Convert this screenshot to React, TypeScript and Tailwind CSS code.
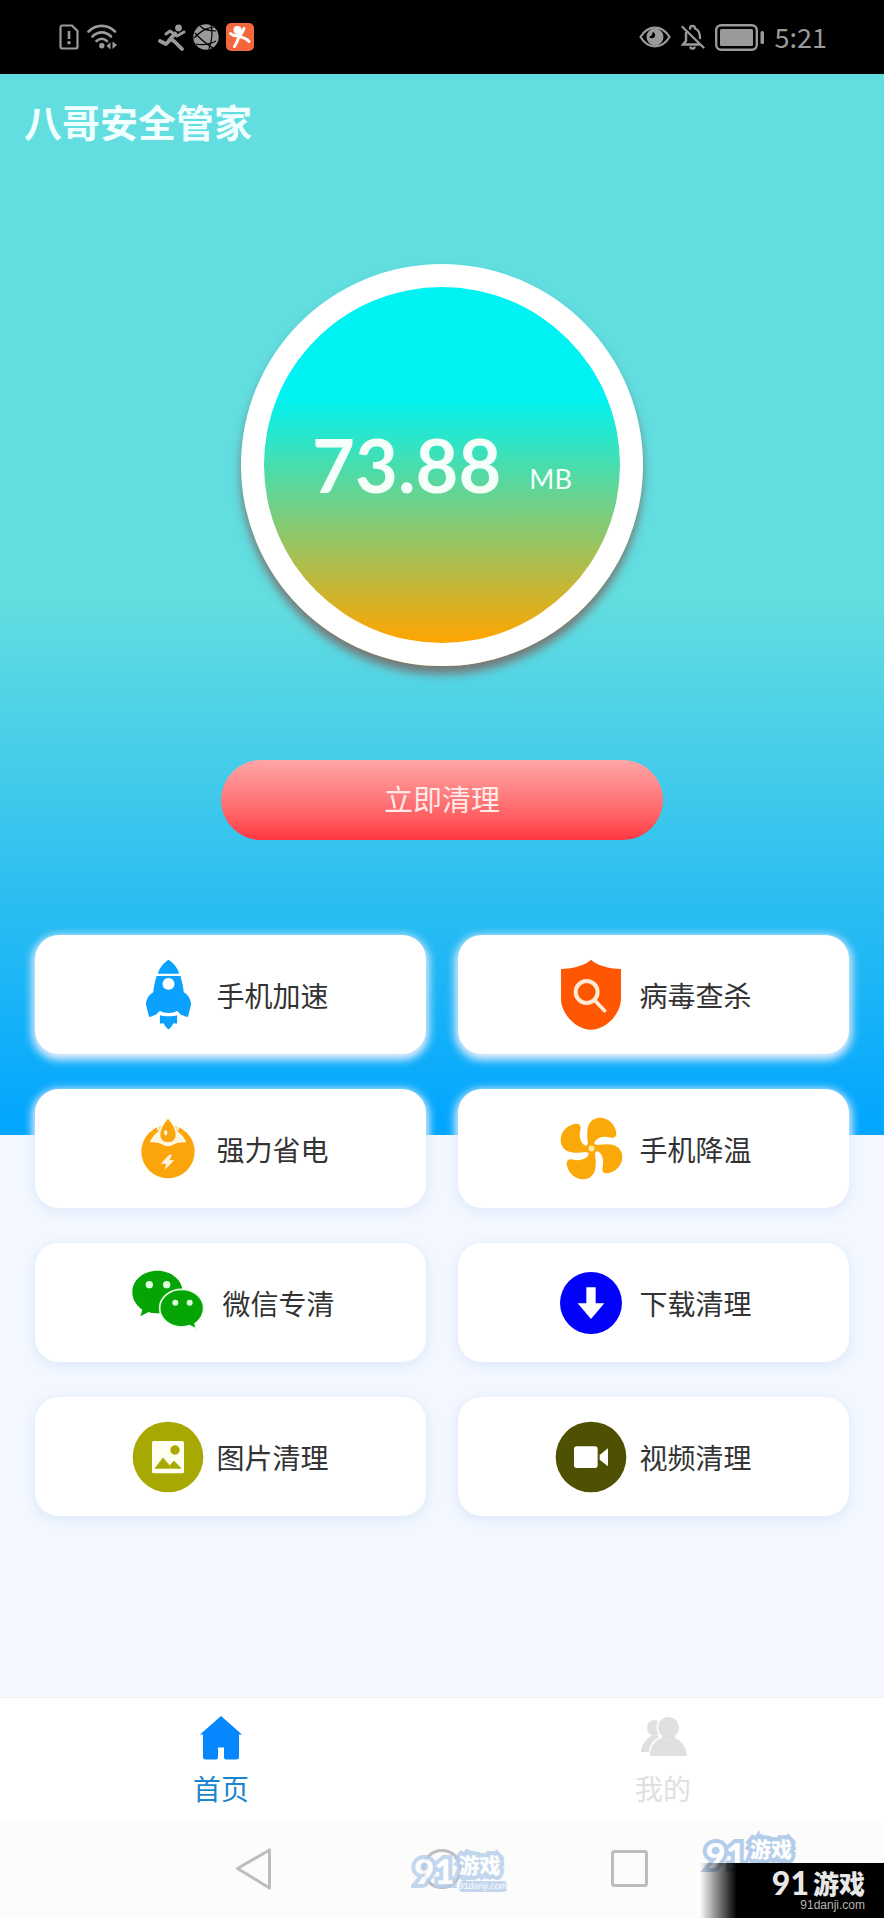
import React from "react";

function StatusBar() {
  return (
    <div className="flex h-[74px] items-center justify-between bg-black pl-[59px] pr-[57px] text-[#9a9a9a]">
      <div className="flex items-center">
        <svg className="h-[26px] w-5" viewBox="0 0 20 26" fill="none" stroke="currentColor" strokeWidth="2.2">
          <path d="M3.500 1.500H13L18.500 7V22.500a2 2 0 0 1-2 2h-13a2 2 0 0 1-2-2v-19a2 2 0 0 1 2-2Z" />
          <path d="M10 7v8" strokeWidth="2.600" />
          <circle cx="10" cy="18.800" r="1.800" fill="currentColor" stroke="none" />
        </svg>
        <svg className="ml-2 h-[26px] w-[31px]" viewBox="0 0 31 26" fill="none" stroke="currentColor" strokeWidth="2.600" strokeLinecap="round">
          <path d="M1.500 7.500C9 0 20.500 0 28 7.500" />
          <path d="M5.500 12.500C11 7 18.500 7 24 12.500" />
          <path d="M9.500 17C13 14 16.500 14 20 17" />
          <circle cx="14.800" cy="21.800" r="2.700" fill="currentColor" stroke="none" />
          <path d="M23.500 18v7.500l-4-3.500ZM25.500 25V17.500l4.500 3.500Z" fill="currentColor" stroke="none" />
        </svg>
        <svg className="ml-[40px] h-[27px] w-7" viewBox="0 0 28 27" fill="none" stroke="currentColor" strokeWidth="3.800" strokeLinecap="round" strokeLinejoin="round">
          <circle cx="20.500" cy="4" r="3.400" fill="currentColor" stroke="none" />
          <path d="M8 10l4-3 7 5 7-4" strokeWidth="3" />
          <path d="M17 9.500l-6 7M2 17l6 3 5-5 4 3 7 7" />
        </svg>
        <svg className="ml-[7px] h-[26px] w-[26px]" viewBox="0 0 26 26">
          <circle cx="13" cy="13" r="12.700" fill="currentColor" />
          <path d="M1 14C7 8 12 4 21 3M2 9c5 6 10 10 18 15M18 1c2 7 1 15-2 24M7 2c3 3 8 5 16 5M3 20c6 1 13 1 20-3" fill="none" stroke="#000" strokeWidth="1.200" />
        </svg>
        <svg className="ml-[7px] h-7 w-7" viewBox="0 0 28 28">
          <rect width="28" height="28" rx="5" fill="#f4673c" />
          <circle cx="11.500" cy="7" r="4" fill="#fff" />
          <path d="M4.500 10.500c3 3 9 3 11 0l2.500-5M12 13.500c4 .5 8 1.500 11 5M13 13c-1 4-2 7-4.500 10.500" fill="none" stroke="#fff" strokeWidth="3" strokeLinecap="round" />
        </svg>
      </div>
      <div className="flex items-center">
        <svg className="h-[22px] w-8" viewBox="0 0 32 22">
          <path d="M1.500 11C9-1.500 23-1.500 30.500 11 23 23.500 9 23.500 1.500 11Z" fill="none" stroke="currentColor" strokeWidth="2.200" />
          <path d="M16 2.500a8.500 8.500 0 1 0 8.500 8.500A8.500 8.500 0 0 0 16 2.500Zm-2.500 3.500a3.200 3.200 0 1 1-3.300 4.700A4 4 0 0 0 13.500 6Z" fill="currentColor" fillRule="evenodd" />
        </svg>
        <svg className="ml-[10px] h-[26px] w-6" viewBox="0 0 24 26" fill="none" stroke="currentColor" strokeWidth="2.400" strokeLinecap="round">
          <path d="M1.500 3L22.500 23.500" />
          <path d="M9 4.500C9 1 14 1 14 4.500 18 6 19 9 19 14" />
          <path d="M5 9v8l-3 3.500h16" />
          <path d="M9.500 23.500c1 1.500 3 1.500 4 0" />
        </svg>
        <svg className="ml-[10px] h-[27px] w-[50px]" viewBox="0 0 50 27">
          <rect x="1.200" y="1.200" width="40.600" height="24.600" rx="5" fill="none" stroke="currentColor" strokeWidth="2.400" />
          <rect x="5" y="5" width="33" height="17" rx="1.500" fill="currentColor" />
          <rect x="45.500" y="7" width="3.500" height="13" rx="1.500" fill="currentColor" />
        </svg>
        <span className="ml-[10px] text-[27px] leading-8">5:21</span>
      </div>
    </div>
  );
}

function RocketIcon() {
  return (
    <svg className="h-[71px] w-[47px]" viewBox="0 0 142 214" fill="#0aa1ff">
      <path d="M71 2C56 12 43 27 39 44h64C99 27 86 12 71 2Z" />
      <path
        fillRule="evenodd"
        d="M35 51h72c6 21 9 36 10 49 14 8 22 22 22 37l-9 37c-8 2-11-2-15-4-9 0-10-9-19-13-8 8-42 8-50 0-9 4-10 13-19 13-4 2-7 6-15 4L3 137c0-15 8-29 22-37 1-13 4-28 10-49ZM71 57a18 18 0 1 0 .1 0Z"
      />
      <path d="M45 170c11 4 41 4 52 0v24c-4 4-7-2-11 0-5 8-8 15-15 18-7-3-10-10-15-18-4-2-7 4-11 0Z" />
    </svg>
  );
}

function ShieldIcon() {
  return (
    <svg className="h-[71px] w-[62px]" viewBox="0 0 186 213">
      <path d="M93 2C76 18 40 29 3 30V118c0 50 48 94 90 94s90-44 90-94V30C146 29 110 18 93 2Z" fill="#ff5602" />
      <circle cx="80" cy="99" r="33" fill="none" stroke="#ffe9d6" strokeWidth="12" />
      <path d="M104 124l30 31" stroke="#ffe9d6" strokeWidth="11" strokeLinecap="round" />
    </svg>
  );
}

function PowerIcon() {
  return (
    <svg className="h-[61px] w-[54px]" viewBox="0 0 162 183">
      <circle cx="81" cy="101" r="80" fill="#fba50a" />
      <path d="M26 73C32 58 42 47 54 38h54c12 9 22 20 28 35-12 1-20 1-30 3-10 4-15 9-25 9s-15-5-25-9c-10-2-18-2-30-3Z" fill="#fff5df" />
      <path d="M81 2C67 17 55 36 55 51a26 25 0 0 0 52 0C107 36 95 17 81 2Z" fill="#fff5df" stroke="#fff5df" strokeWidth="7" />
      <path d="M52 15v22M110 15v22" stroke="#fff" strokeWidth="6" />
      <path d="M81 3C67 19 58 36 58 51a23 22 0 0 0 46 0C104 36 95 19 81 3Z" fill="#fba50a" />
      <ellipse cx="74" cy="44" rx="5" ry="8" fill="#fff5df" />
      <path d="M84 110l-24 27h16l-5 18 29-28H85l8-17Z" fill="#fff5df" />
    </svg>
  );
}

const BLADE = "M84 94C84 74 79 56 82 38 84 16 100 1 120 2c24 0 44 20 48 44 1 12-6 18-18 15-20-5-38 0-46 12-3 6-2 12-4 21Z";

function FanIcon() {
  return (
    <svg className="h-[63px] w-[63px]" viewBox="0 0 188 188">
      <g fill="#fba809">
        <path d={BLADE} />
        <path d={BLADE} transform="rotate(90 94 94)" />
        <path d={BLADE} transform="rotate(180 94 94)" />
        <path d={BLADE} transform="rotate(270 94 94)" />
        <circle cx="94" cy="94" r="17" />
      </g>
      <circle cx="94" cy="94" r="9" fill="#ffe9a8" />
    </svg>
  );
}

function WechatIcon() {
  return (
    <svg className="h-[66px] w-[72px]" viewBox="0 0 216 198">
      <path d="M76 2C34 2 1 30 1 66c0 22 11 40 30 53l-6 20 25-13c8 3 17 4 26 4 42 0 76-28 76-64S118 2 76 2Z" fill="#05a505" />
      <path
        d="M149 58c-37 0-66 25-66 56s29 57 66 57c9 0 17-2 24-4l21 11-5-17c16-11 26-27 26-47 0-31-29-56-66-56Z"
        fill="#05a505"
        stroke="#e9ffe9"
        strokeWidth="5"
      />
      <g fill="#dcffdc">
        <circle cx="52" cy="44" r="11" />
        <circle cx="104" cy="44" r="11" />
        <circle cx="130" cy="98" r="9" />
        <circle cx="173" cy="98" r="9" />
      </g>
    </svg>
  );
}

function DownloadIcon() {
  return (
    <svg className="h-[62px] w-[62px]" viewBox="0 0 186 186">
      <circle cx="93" cy="93" r="93" fill="#0202fb" />
      <path d="M79 46h28v48h26l-40 47-40-47h26Z" fill="#fff" />
    </svg>
  );
}

function PictureIcon() {
  return (
    <svg className="h-[72px] w-[72px]" viewBox="0 0 216 216">
      <circle cx="108" cy="108" r="106" fill="#a8a802" />
      <rect x="60" y="60" width="96" height="97" rx="5" fill="#fffff0" />
      <circle cx="129" cy="87" r="14" fill="#a8a802" />
      <path d="M69 142l24-31 20 23 13-14 21 22Z" fill="#a8a802" stroke="#a8a802" strokeWidth="2" strokeLinejoin="round" />
    </svg>
  );
}

function VideoIcon() {
  return (
    <svg className="h-[72px] w-[72px]" viewBox="0 0 216 216">
      <circle cx="108" cy="108" r="106" fill="#505002" />
      <rect x="57" y="76" width="71" height="65" rx="8" fill="#fff" />
      <path d="M134 102l25-20v54l-25-20Z" fill="#fff" />
    </svg>
  );
}

interface FeatureCardProps {
  label: string;
  icon: React.ReactNode;
  wide?: boolean;
}

function FeatureCard({ label, icon, wide }: FeatureCardProps) {
  return (
    <button
      type="button"
      className="flex h-[119px] items-center justify-center gap-3 rounded-3xl bg-white text-[28px] leading-9 text-[#333] shadow-[0_3px_9px_3px_#e3edfc]"
    >
      <span className={wide ? "flex w-[84px] justify-center" : "flex w-[72px] justify-center"}>{icon}</span>
      <span>{label}</span>
    </button>
  );
}

const features: FeatureCardProps[] = [
  { label: "手机加速", icon: <RocketIcon /> },
  { label: "病毒查杀", icon: <ShieldIcon /> },
  { label: "强力省电", icon: <PowerIcon /> },
  { label: "手机降温", icon: <FanIcon /> },
  { label: "微信专清", icon: <WechatIcon />, wide: true },
  { label: "下载清理", icon: <DownloadIcon /> },
  { label: "图片清理", icon: <PictureIcon /> },
  { label: "视频清理", icon: <VideoIcon /> },
];

function TabBar() {
  return (
    <nav className="grid h-[123px] grid-cols-2 border-t border-[#f0f0f2] bg-white text-[28px] leading-9">
      <button type="button" className="flex flex-col items-center gap-[10px] pt-[18px] text-[#1c85cf]">
        <svg className="h-11 w-11" viewBox="0 0 44 44" fill="#0588ff">
          <path d="M22 0L1 18.500h3V41a2.500 2.500 0 0 0 2.500 2.500H17a2 2 0 0 0 2-2V31.500h6v10a2 2 0 0 0 2 2h10.500A2.500 2.500 0 0 0 40 41V18.500h3Z" />
        </svg>
        首页
      </button>
      <button type="button" className="flex flex-col items-center gap-[10px] pt-[18px] text-[#e0e0e0]">
        <svg className="h-11 w-12" viewBox="0 0 48 44" fill="#e0e0e0">
          <ellipse cx="15" cy="12" rx="7" ry="8" />
          <path d="M2 36c0-7 4-12 10-16h8v16Z" />
          <g stroke="#fff" strokeWidth="3" paintOrder="stroke">
            <path d="M11 40c0-10 5-16 12-18v-5h12v5c7 2 12 8 13 18Z" />
            <circle cx="29.500" cy="11.500" r="10.500" />
          </g>
          <path d="M23 18h13v5H23Z" />
        </svg>
        我的
      </button>
    </nav>
  );
}

function Watermark({ site }: { site?: boolean }) {
  return (
    <div className="flex items-start gap-1 text-white [-webkit-text-stroke:8px_#b4cdea] [paint-order:stroke_fill]">
      <span className="font-[Lato] text-[35px] leading-9 font-black">91</span>
      <span className="flex flex-col gap-[5px]">
        <span className="text-[21px] leading-6 font-black">游戏</span>
        {site && (
          <span className="relative rounded-sm bg-[#b4cdea] font-['Liberation_Sans'] text-[9px] leading-[11px] [-webkit-text-stroke:0px]">
            91danji.com
          </span>
        )}
      </span>
    </div>
  );
}

function SystemNav() {
  return (
    <div className="relative flex h-[98px] items-center justify-center gap-[148px] overflow-hidden bg-[#fcfcfc] text-[#bdbdbd]">
      <button type="button" aria-label="返回">
        <svg className="h-[42px] w-10" viewBox="0 0 40 42" fill="none" stroke="currentColor" strokeWidth="3" strokeLinejoin="round">
          <path d="M35.500 2v38L3.500 20.500Z" />
        </svg>
      </button>
      <button type="button" aria-label="主页">
        <svg className="h-[42px] w-10" viewBox="0 0 40 42" fill="none" stroke="currentColor" strokeWidth="3">
          <circle cx="20" cy="21" r="18.500" />
        </svg>
      </button>
      <button type="button" aria-label="最近任务">
        <svg className="h-[42px] w-10" viewBox="0 0 40 42" fill="none" stroke="currentColor" strokeWidth="3">
          <rect x="2.500" y="3.500" width="34" height="34" rx="2" />
        </svg>
      </button>
      <div className="absolute top-8 left-1/2 -ml-[28px] opacity-80">
        <Watermark site />
      </div>
      <div className="absolute top-4 right-[92px]">
        <Watermark />
      </div>
      <div className="absolute right-0 bottom-0 flex h-[55px] w-[184px] flex-col items-end bg-linear-to-r from-transparent to-black to-20% pt-[6px] pr-[19px] text-[#e8e8e8]">
        <div className="flex items-center gap-1">
          <span className="font-[Lato] text-[32px] leading-7 font-black">91</span>
          <span className="text-[26px] leading-7 font-black">游戏</span>
        </div>
        <span className="font-['Liberation_Sans'] text-[12px] leading-4 text-[#b5b5b5]">91danji.com</span>
      </div>
    </div>
  );
}

export default function App() {
  return (
    <div className="flex min-h-screen flex-col font-['Noto_Sans_CJK_SC',sans-serif]">
      <StatusBar />
      <main className="flex flex-1 flex-col bg-[linear-gradient(#62dde0_0px,#62dde0_530px,#00a5ff_1061px,#f3f7ff_1061px)] pb-10">
        <h1 className="px-6 pt-[26px] text-[38px] leading-[42px] font-bold text-[#f0ffff]">八哥安全管家</h1>
        <div className="mt-[122px] flex h-[402px] w-[402px] items-center justify-center gap-7 self-center rounded-full bg-[linear-gradient(#00f3f3_33%,#ffa500_94%)] text-[#f4fffa] shadow-[0_8px_10px_#777] ring-[23px] ring-white ring-inset">
          <span className="font-[Lato] text-[74px] leading-none font-bold">73.88</span>
          <span className="pt-7 font-[Lato] text-[27px] leading-9">MB</span>
        </div>
        <button
          type="button"
          className="mt-[94px] h-20 w-1/2 self-center rounded-full bg-linear-to-b from-[#ffa5a8] to-[#ff3443] pb-1 text-[29px] leading-9 text-[#ffe9e9]"
        >
          立即清理
        </button>
        <div className="mt-[95px] grid grid-cols-2 gap-x-8 gap-y-[35px] px-[35px]">
          {features.map((feature) => (
            <FeatureCard key={feature.label} {...feature} />
          ))}
        </div>
      </main>
      <TabBar />
      <SystemNav />
    </div>
  );
}
